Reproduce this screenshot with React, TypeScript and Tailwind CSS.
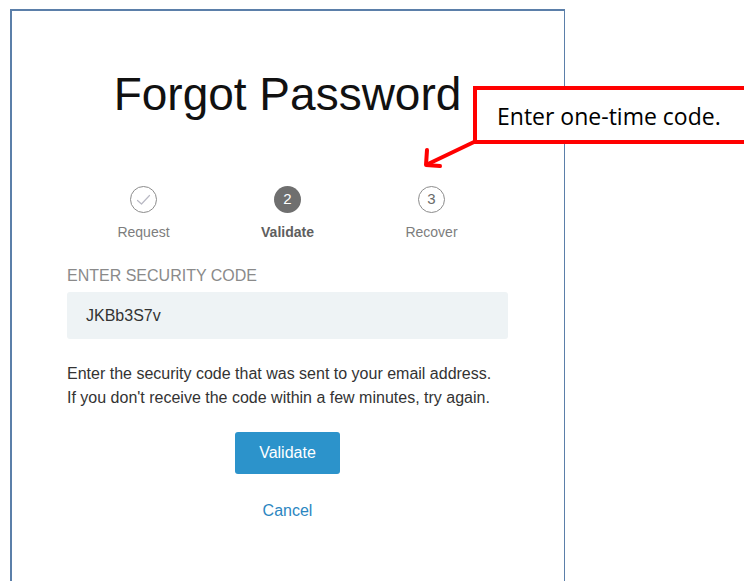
import React from 'react';

const font = { fontFamily: '"Liberation Sans", Arial, sans-serif' };

type StepState = 'done' | 'active' | 'todo';

const steps: { label: string; state: StepState }[] = [
  { label: 'Request', state: 'done' },
  { label: 'Validate', state: 'active' },
  { label: 'Recover', state: 'todo' },
];

function StepDot({ index, state }: { index: number; state: StepState }) {
  if (state === 'active') {
    return (
      <div className="flex h-[27px] w-[27px] items-center justify-center rounded-full bg-[#6f6f6f] text-[15px] text-white">
        {index + 1}
      </div>
    );
  }
  return (
    <div className="flex h-[27px] w-[27px] items-center justify-center rounded-full border border-[#8c8c8c] bg-white text-[15px] text-[#6a6a6a]">
      {state === 'done' ? (
        <svg width="15" height="12" viewBox="0 0 15 12" fill="none">
          <path d="M1.5 6.5 L5.5 10 L13.5 1.5" stroke="#b9b9c4" strokeWidth="1.2" strokeLinecap="round" strokeLinejoin="round" />
        </svg>
      ) : (
        index + 1
      )}
    </div>
  );
}

function Callout() {
  return (
    <>
      <div
        className="absolute left-[473px] top-[86px] flex h-[58px] w-[300px] items-center border-[4px] border-[#ff0000] bg-white pl-[20px] pt-[3px] text-[23px] text-black"
        style={{ fontFamily: '"Open Sans", Lato, sans-serif' }}
      >
        Enter one-time code.
      </div>
      <svg className="absolute left-[420px] top-[132px]" width="60" height="40" viewBox="0 0 60 40" fill="none">
        <path d="M54 10 L8 32" stroke="#ff0000" strokeWidth="4" strokeLinecap="round" />
        <path d="M7 18 L6 33 L20 34" stroke="#ff0000" strokeWidth="4" strokeLinecap="round" strokeLinejoin="round" />
      </svg>
    </>
  );
}

export default function App() {
  return (
    <div className="relative h-[581px] w-[744px] overflow-hidden bg-white" style={font}>
      <div className="pl-[10px] pt-[9px]">
        <div className="h-[620px] w-[555px] border-l-2 border-r border-t-2 border-[#5b7fa9] bg-white">
          <div className="flex flex-col pl-[55px] pr-14">
            <h1 className="mt-[55px] text-center text-[46px] leading-[56px] text-[#111]">Forgot Password</h1>

            <div className="mt-[64px] flex justify-center">
              {steps.map((step, i) => (
                <div key={step.label} className="flex w-[144px] flex-col items-center">
                  <StepDot index={i} state={step.state} />
                  <span
                    className={
                      step.state === 'active'
                        ? 'mt-[9px] text-[14px] font-bold text-[#5e5e5e]'
                        : 'mt-[9px] text-[14px] text-[#7d7d7d]'
                    }
                  >
                    {step.label}
                  </span>
                </div>
              ))}
            </div>

            <label className="mt-[21px] text-[16px] text-[#8a8a8a]">ENTER SECURITY CODE</label>
            <div className="mt-[4px] flex h-[47px] items-center rounded-[3px] bg-[#eef3f5] px-[19px] text-[16px] text-[#333]">
              JKBb3S7v
            </div>

            <p className="mt-[23px] text-[16px] leading-[24px] text-[#333]">
              Enter the security code that was sent to your email address.
              <br />
              If you don't receive the code within a few minutes, try again.
            </p>

            <div className="mt-[22px] flex flex-col items-center">
              <button className="h-[42px] w-[105px] rounded-[3px] bg-[#2c93cb] text-[16px] text-white">Validate</button>
              <a className="mt-[25px] text-[16px] text-[#2b86c1]">Cancel</a>
            </div>
          </div>
        </div>
      </div>
      <Callout />
    </div>
  );
}
